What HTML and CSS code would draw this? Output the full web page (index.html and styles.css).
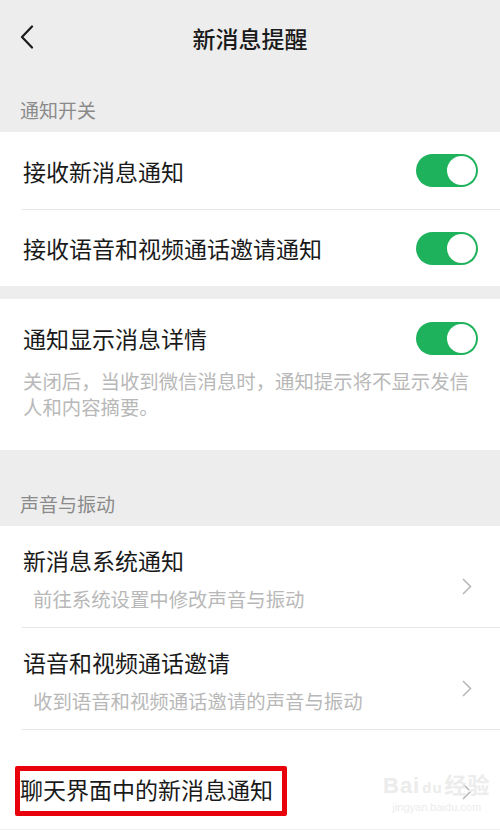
FILE: index.html
```html
<!DOCTYPE html>
<html lang="zh-CN">
<head>
    <meta charset="UTF-8">
    <meta name="viewport" content="width=device-width, initial-scale=1.0">
    <title>新消息提醒</title>
    <link rel="stylesheet" href="styles.css">
</head>
<body>
    <header class="topbar">
        <span class="back">
            <svg width="14" height="24" viewBox="0 0 14 24"><path d="M12 1.5 L2 12 L12 22.5" fill="none" stroke="#1a1a1a" stroke-width="2.2" stroke-linecap="round" stroke-linejoin="round"/></svg>
        </span>
        <h1>新消息提醒</h1>
    </header>

    <div class="group-label first">通知开关</div>
    <div class="card">
        <div class="row switch-row tall">
            <span class="title">接收新消息通知</span>
            <span class="toggle"><span class="knob"></span></span>
        </div>
        <div class="row switch-row">
            <span class="title">接收语音和视频通话邀请通知</span>
            <span class="toggle"><span class="knob"></span></span>
        </div>
    </div>

    <div class="card spaced detail">
        <div class="switch-row detail-head">
            <span class="title">通知显示消息详情</span>
            <span class="toggle"><span class="knob"></span></span>
        </div>
        <p class="desc">关闭后，当收到微信消息时，通知提示将不显示发信人和内容摘要。</p>
    </div>

    <div class="group-label">声音与振动</div>
    <div class="card last">
        <div class="row link-row">
            <div class="texts">
                <div class="title">新消息系统通知</div>
                <div class="sub">前往系统设置中修改声音与振动</div>
            </div>
            <svg class="chev" width="10" height="17" viewBox="0 0 10 17"><path d="M1 1 L8.5 8.5 L1 16" fill="none" stroke="#b8b8b8" stroke-width="1.6"/></svg>
        </div>
        <div class="row link-row">
            <div class="texts">
                <div class="title">语音和视频通话邀请</div>
                <div class="sub">收到语音和视频通话邀请的声音与振动</div>
            </div>
            <svg class="chev" width="10" height="17" viewBox="0 0 10 17"><path d="M1 1 L8.5 8.5 L1 16" fill="none" stroke="#b8b8b8" stroke-width="1.6"/></svg>
        </div>
        <div class="row chat-row">
            <span class="marked title">聊天界面中的新消息通知</span>
            <svg class="chev" width="10" height="17" viewBox="0 0 10 17"><path d="M1 1 L8.5 8.5 L1 16" fill="none" stroke="#b8b8b8" stroke-width="1.6"/></svg>
            <div class="watermark">
                <span class="wm-main">Bai<span class="paw">du</span>经验</span>
                <span class="wm-sub">jingyan.baidu.com</span>
            </div>
        </div>
    </div>
</body>
</html>
```

FILE: styles.css
```css
body {
    margin: 0;
    background-color: #ededed;
    font-family: "Noto Sans CJK SC", "Noto Sans", sans-serif;
    color: #1a1a1a;
}

.topbar {
    height: 76px;
    display: flex;
    align-items: center;
    justify-content: center;
    position: relative;
}

.topbar h1 {
    margin: 0;
    font-size: 23px;
    font-weight: 500;
    line-height: 30px;
}

.back {
    position: absolute;
    left: 20px;
    top: 25px;
    display: flex;
}

.group-label {
    height: 76px;
    box-sizing: border-box;
    padding: 0 20px 9px;
    display: flex;
    align-items: flex-end;
    font-size: 19px;
    line-height: 26px;
    color: #8a8a8a;
}

.group-label.first {
    height: 56px;
}

.card {
    background-color: #fff;
}

.card.spaced {
    margin-top: 13px;
}

.title {
    font-size: 23px;
    line-height: 28px;
}

.row {
    margin-left: 22px;
    padding-right: 22px;
    border-bottom: 1px solid #e6e6e6;
}

.row:last-child {
    border-bottom: none;
}

.switch-row {
    display: flex;
    align-items: center;
    justify-content: space-between;
    height: 76px;
}

.switch-row.tall {
    height: 77px;
}

.switch-row .title {
    padding-left: 1px;
}

.toggle {
    width: 62px;
    height: 33px;
    box-sizing: border-box;
    padding: 2px;
    border-radius: 17px;
    background-color: #1fb25c;
    display: flex;
    justify-content: flex-end;
}

.knob {
    width: 29px;
    height: 29px;
    border-radius: 50%;
    background-color: #fff;
}

.detail {
    padding: 20px 22px 30px 23px;
    height: 151px;
    box-sizing: border-box;
}

.detail-head {
    height: 38px;
}

.detail-head .title {
    padding-left: 0;
}

.desc {
    margin: 11px 0 0;
    font-size: 19.4px;
    line-height: 26px;
    color: #b8b8b8;
    padding-right: 8px;
}

.link-row {
    display: flex;
    align-items: center;
    justify-content: space-between;
    padding-top: 20px;
    padding-bottom: 15px;
    padding-right: 28px;
    height: 66px;
}

.link-row .title {
    padding-left: 1px;
}

.link-row .chev {
    margin-top: 14px;
}

.sub {
    margin-top: 12px;
    padding-left: 11px;
    font-size: 19.4px;
    line-height: 26px;
    color: #b8b8b8;
}

.card.last {
    min-height: 303px;
}

.chat-row {
    margin-left: 15px;
    padding-top: 36px;
    padding-right: 28px;
    display: flex;
    align-items: center;
    justify-content: space-between;
    position: relative;
}

.marked {
    border: 5px solid #e8000b;
    border-radius: 2px;
    padding: 4px 9px 8px 0;
}

.watermark {
    position: absolute;
    left: 368px;
    top: 44px;
    display: flex;
    flex-direction: column;
    align-items: center;
    color: #ececec;
    font-family: "Liberation Sans", "Noto Sans CJK SC", sans-serif;
}

.wm-main {
    font-size: 22px;
    font-weight: bold;
    line-height: 24px;
    letter-spacing: 1px;
}

.paw {
    font-size: 15px;
    margin: 0 2px;
}

.wm-sub {
    font-size: 11px;
    line-height: 14px;
}
```
